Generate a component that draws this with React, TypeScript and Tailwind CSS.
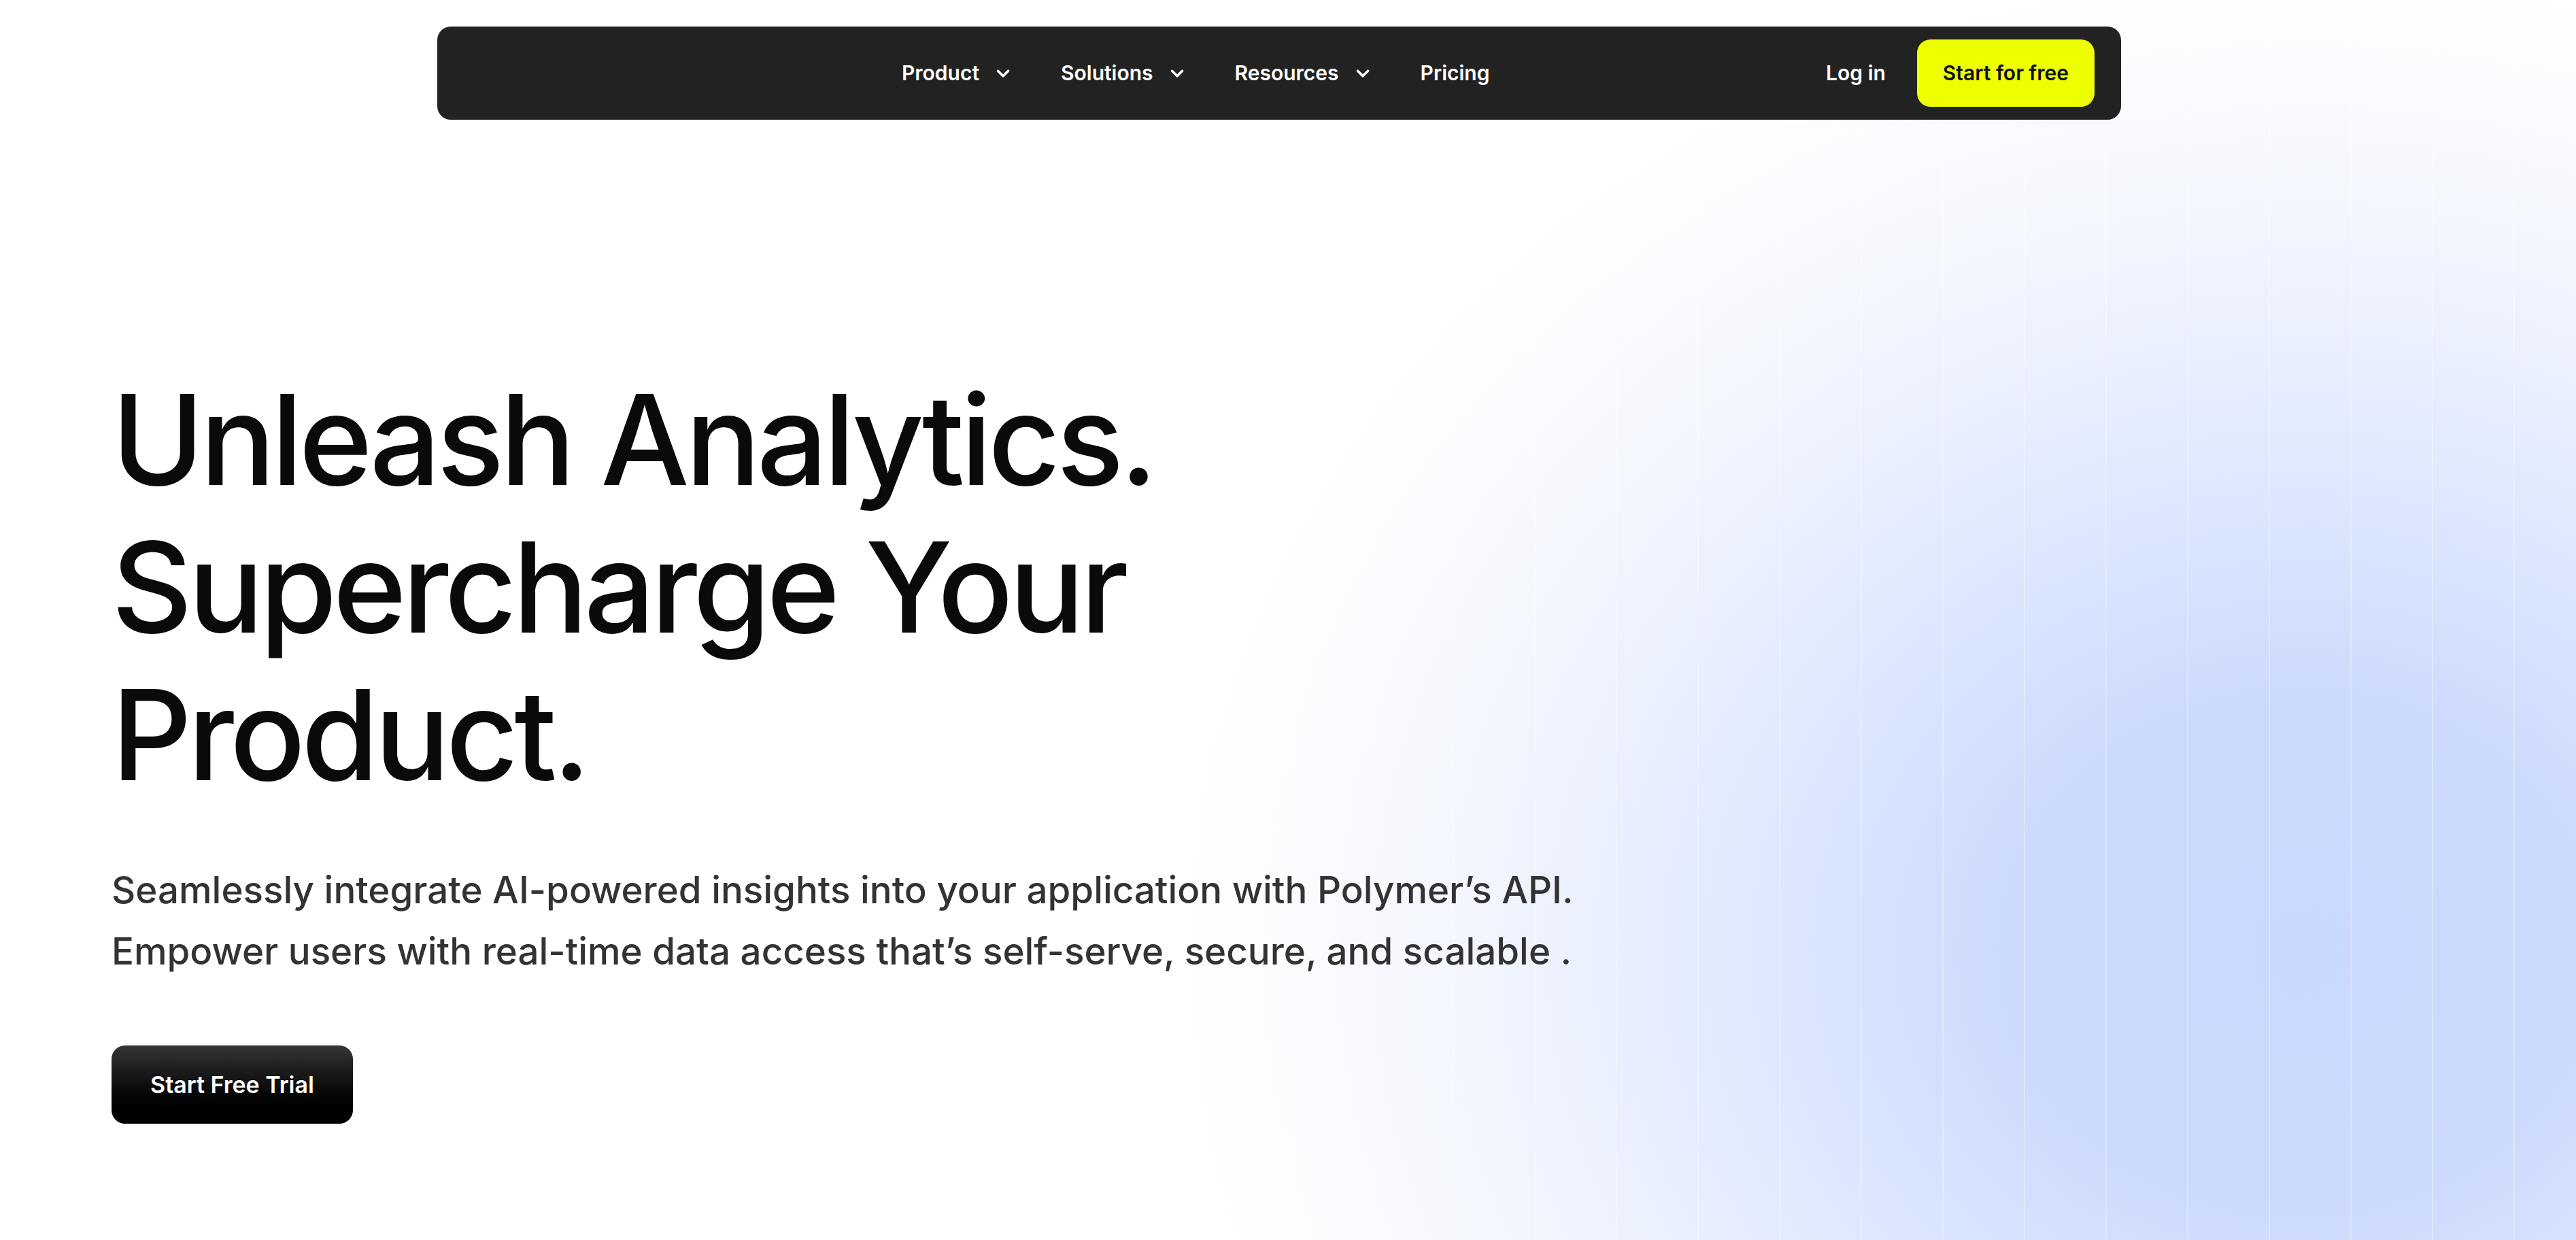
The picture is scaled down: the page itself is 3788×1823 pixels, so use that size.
import { ChevronDown } from "lucide-react";

const navLinks = [
  { label: "Product", menu: true },
  { label: "Solutions", menu: true },
  { label: "Resources", menu: true },
  { label: "Pricing", menu: false },
];

export default function App() {
  return (
    <main className="relative min-h-[1823px] w-full overflow-hidden bg-white bg-[image:repeating-linear-gradient(90deg,transparent_0px,transparent_96px,rgba(255,255,255,0.3)_96px,rgba(255,255,255,0.3)_98px,transparent_98px,transparent_120px),radial-gradient(ellipse_1650px_1450px_at_3380px_1400px,#c9d8fd_0%,#ccdafd_26%,#e0e9fe_50%,#f3f6fe_74%,#ffffff_100%)] font-['Inter',sans-serif] text-[#0a0a0a]">
      <div className="pt-[39px] pl-[643px]">
        <nav className="flex h-[137px] w-[2476px] items-center rounded-[20px] bg-[#222222] pr-[39px] pl-[683px]">
          <ul className="flex items-center gap-[70px]">
            {navLinks.map((link) => (
              <li key={link.label}>
                <a href="#" className="flex items-center gap-[20px] text-[30px] font-semibold text-white">
                  {link.label}
                  {link.menu && <ChevronDown size={30} strokeWidth={3} />}
                </a>
              </li>
            ))}
          </ul>

          <div className="ml-auto flex items-center gap-[46px]">
            <a href="#" className="text-[30px] font-semibold text-white">
              Log in
            </a>
            <a
              href="#"
              className="flex h-[99px] items-center rounded-[20px] bg-[#eeff00] px-[38px] text-[30px] font-semibold text-[#111]"
            >
              Start for free
            </a>
          </div>
        </nav>
      </div>

      <section className="pl-[164px] pt-[362px]">
        <h1 className="text-[184px] leading-[217px] font-medium tracking-[-0.032em]">
          Unleash Analytics.
          <br />
          Supercharge Your
          <br />
          Product.
        </h1>

        <p className="mt-[74px] text-[54.7px] leading-[90px] font-medium text-[#333333]">
          Seamlessly integrate AI-powered insights into your application with Polymer’s API.
          <br />
          Empower users with real-time data access that’s self-serve, secure, and scalable .
        </p>

        <a
          href="#"
          className="mt-[94px] flex h-[115px] w-[355px] items-center justify-center rounded-[20px] bg-gradient-to-b from-[#363636] to-[#000000] text-[34px] font-semibold text-white"
        >
          Start Free Trial
        </a>
      </section>
    </main>
  );
}
